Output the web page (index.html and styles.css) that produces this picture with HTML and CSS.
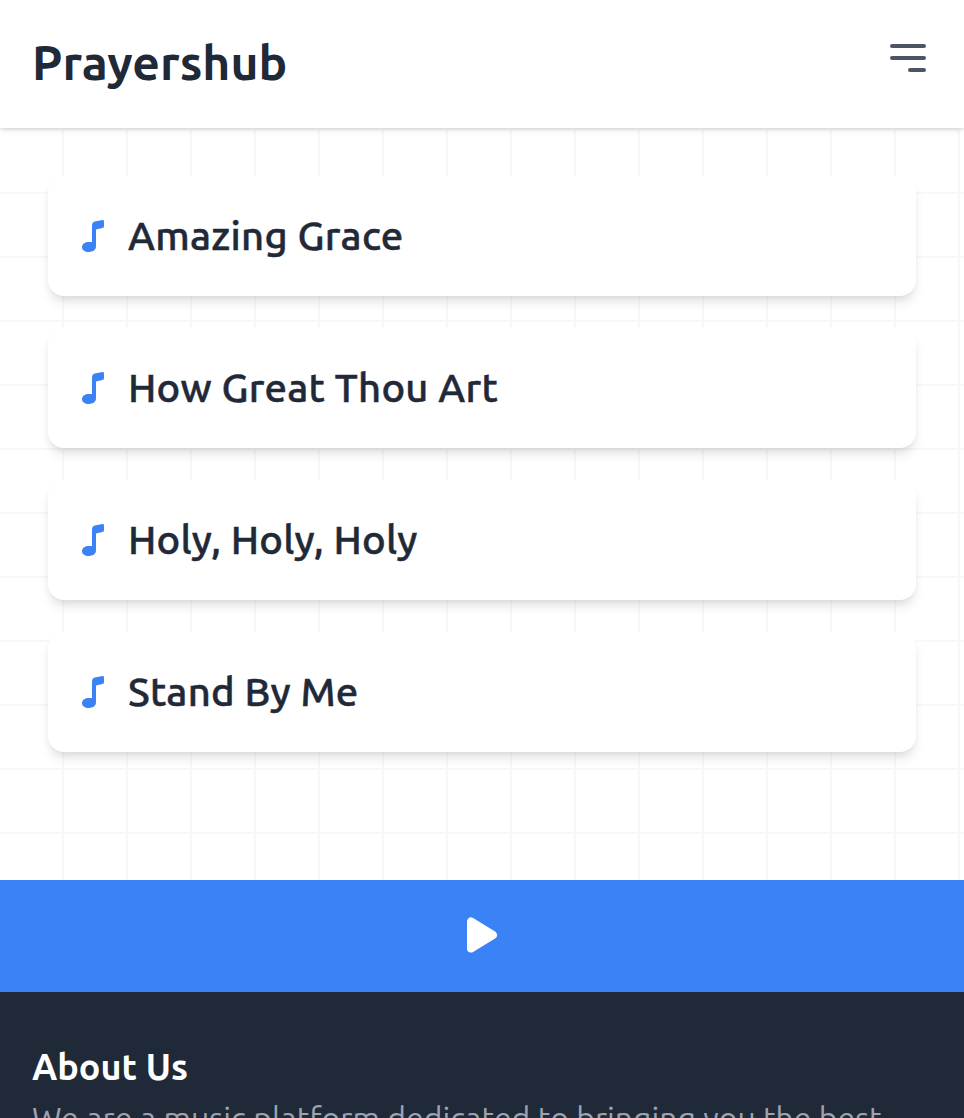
FILE: index.html
```
<!DOCTYPE html>
<html lang="en">
<head>
<meta charset="utf-8">
<title>Prayershub</title>
<link rel="stylesheet" href="styles.css">
</head>
<body>
<svg class="sprite" aria-hidden="true">
  <symbol id="note" viewBox="0 0 24 34">
    <path d="M12 6.2Q12 3.3 14.6 2.5L22.4 1.1Q24 .8 24 2.5V7.2Q24 8.7 22.3 9.1L16 10.6V27.3C16 31.3 12.8 33 9 33C5 33 2 31.2 2 28C2 24.9 5.2 23 9 23H12Z"/>
  </symbol>
</svg>
<header class="header">
  <h1 class="brand">Prayershub</h1>
  <button class="menu" aria-label="Menu">
    <svg viewBox="0 0 24 24"><path d="M4 6h16M4 12h16M13 18h7"/></svg>
  </button>
</header>
<main class="songs">
  <article class="song"><svg class="note"><use href="#note"/></svg><h2 class="title">Amazing Grace</h2></article>
  <article class="song"><svg class="note"><use href="#note"/></svg><h2 class="title">How Great Thou Art</h2></article>
  <article class="song"><svg class="note"><use href="#note"/></svg><h2 class="title">Holy, Holy, Holy</h2></article>
  <article class="song"><svg class="note"><use href="#note"/></svg><h2 class="title">Stand By Me</h2></article>
</main>
<section class="player">
  <button class="play" aria-label="Play">
    <svg viewBox="0 0 32 38"><path d="M5 5.5v27L27 19Z"/></svg>
  </button>
</section>
<footer class="footer">
  <h3 class="about">About Us</h3>
  <p class="blurb">We are a music platform dedicated to bringing you the best</p>
</footer>
</body>
</html>
```
FILE: styles.css
```
* { box-sizing: border-box; margin: 0; padding: 0; }
html, body { height: 100%; overflow: hidden; }
body {
  display: flex;
  flex-direction: column;
  background: #fff;
  font-family: Ubuntu, "Noto Sans", sans-serif;
  color: #1f2937;
}
button { border: 0; background: none; }
svg { display: block; }
.sprite { position: absolute; width: 0; height: 0; }
.header {
  position: relative;
  z-index: 1;
  flex: none;
  display: flex;
  justify-content: space-between;
  align-items: flex-start;
  height: 128px;
  padding: 32px;
  background: #fff;
  box-shadow: 0 2px 6px rgba(0,0,0,.1), 0 2px 4px -2px rgba(0,0,0,.1);
}
.brand { font-size: 48px; line-height: 60px; font-weight: 600; white-space: nowrap; }
.menu { width: 48px; height: 48px; margin-top: 2px; }
.menu svg { width: 48px; height: 48px; fill: none; stroke: #4b5563; stroke-width: 2; stroke-linecap: round; }
.songs {
  flex: none;
  display: flex;
  flex-direction: column;
  gap: 32px;
  height: 752px;
  padding: 48px;
  background-image:
    linear-gradient(to bottom, #f8f8f8 2px, transparent 2px),
    linear-gradient(to left, #f8f8f8 2px, transparent 2px);
  background-size: 64px 64px;
}
.song {
  display: flex;
  align-items: center;
  gap: 24px;
  height: 120px;
  padding: 0 32px;
  border-radius: 16px;
  background: #fff;
  box-shadow: 0 8px 12px -2px rgba(0,0,0,.1), 0 4px 8px -4px rgba(0,0,0,.1);
}
.note { width: 24px; height: 34px; fill: #3b82f6; }
.title {
  font-size: 40px;
  line-height: 56px;
  font-weight: 500;
  letter-spacing: .26px;
  -webkit-text-stroke: .5px #1f2937;
  white-space: nowrap;
}
.player {
  flex: none;
  display: flex;
  justify-content: center;
  align-items: center;
  height: 112px;
  padding-bottom: 2px;
  background: #3b82f6;
}
.play svg { width: 32px; height: 38px; fill: #fff; stroke: #fff; stroke-width: 8; stroke-linejoin: round; }
.footer { flex: 1 0 auto; padding: 47px 32px 0; background: #1f2937; color: #fff; }
.about { font-size: 36px; line-height: 56px; font-weight: 600; white-space: nowrap; }
.blurb { font-size: 32px; line-height: 46px; font-weight: 400; color: #9ca3af; white-space: nowrap; }
```
